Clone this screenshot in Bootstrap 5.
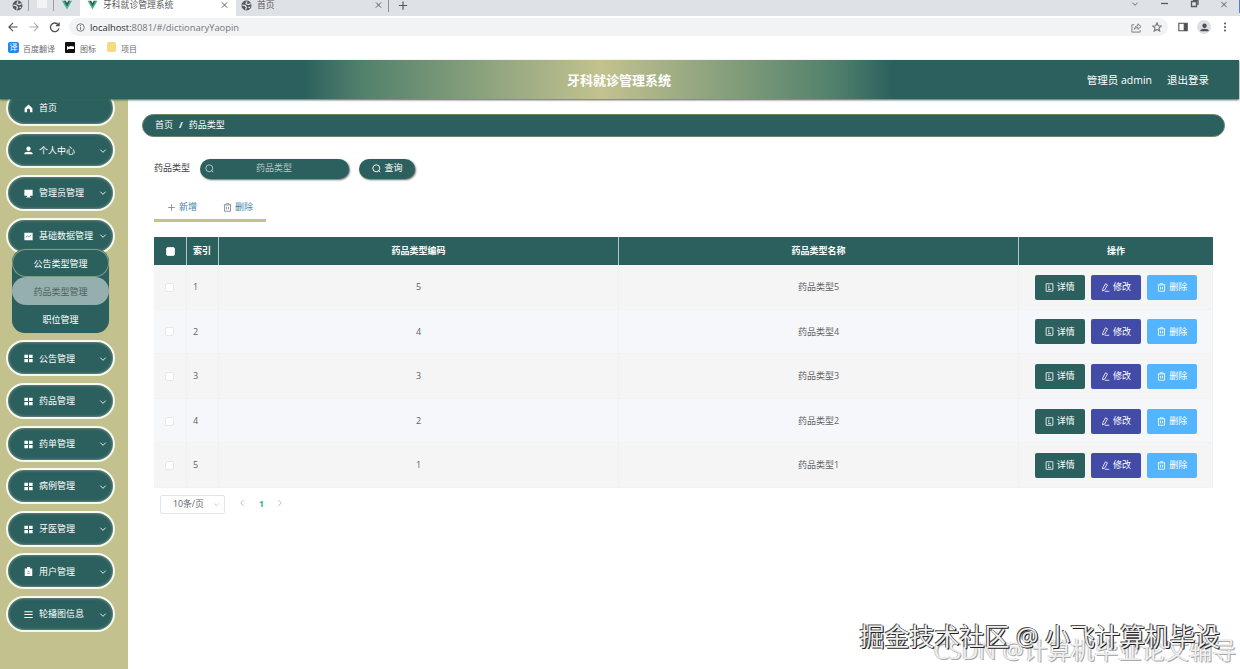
<!DOCTYPE html>
<html lang="zh-CN">
<head>
<meta charset="utf-8">
<title>牙科就诊管理系统</title>
<link href="https://cdn.jsdelivr.net/npm/bootstrap@5.3.0/dist/css/bootstrap.min.css" rel="stylesheet">
<style>
:root{--teal:#2c605e;--khaki:#c3c28f}
body{font:9px/1.4 "Open Sans","Noto Sans CJK SC",sans-serif;color:#606266;background:#fff;height:669px;overflow:hidden}
svg{display:block;flex:none;fill:none;stroke:currentColor;stroke-width:1.3}
svg.fill{fill:currentColor;stroke:none}
.tabstrip{height:16px;background:#dee1e6;color:#55585b;overflow:hidden;font-size:8.8px}
.tabstrip .pinned{width:25px;height:11px;border-right:1px solid #9a9da1}
.tab-on{width:156px;background:#fff;height:16px}
.tab-off{width:153px;height:12px;border-right:1px solid #8d9094}
.tools{height:22px;color:#4c4f53}
.omni{height:18px;border-radius:9px;background:#f1f3f4;font-size:9.35px;color:#74777b}
.omni b{font-weight:400;color:#2c2f33}
.favs{height:22px;color:#6a6d70;font-size:8px;line-height:12px;padding:4px 0 0 8px}
.sq{width:11px;height:11px;border-radius:2px}
.topbar{height:39px;background:linear-gradient(90deg,var(--teal) 24.5%,#50806b 29%,var(--khaki) 48.5%,#50806b 67.5%,var(--teal) 72%);box-shadow:0 1px 2px #555;color:#fff;width:1239px;z-index:2}
.topbar h1{font-size:13px;font-weight:700;margin:0;line-height:41px;padding-right:1px}
.userbox{font-size:10.5px;right:30px;top:0;line-height:40px}
.shell{height:570px}
.side{width:128px;background:var(--khaki);overflow:hidden;padding-left:6px}
.menu{margin-top:-9.3px}
.mi{width:109px;height:36px;margin-bottom:6.62px;border:2px solid #f7f8ee;border-radius:18px;background:var(--teal);box-shadow:inset 0 0 3px #9aa99a;color:#fff;padding:1px 6px 0 16px}
.mi .lbl{margin-left:6px}
.sub{width:97px;margin:-11px 0 7px 6px;border-radius:13px;background:var(--teal);color:#fff;position:relative;overflow:hidden;box-shadow:0 0 1px #8ca292}
.sub div{height:28.1px;line-height:29px;text-align:center;border-radius:14px}
.sub div:first-child{box-shadow:inset 0 0 0 1px #809d83}
.sub .cur{background:#95afae;color:#4c6261}
.main{padding:15px 27px 0 26px}
.crumb{height:23px;margin:0 -11px 0 -12px;width:1083px;border-radius:12px;background:var(--teal);border:1px solid #6c8467;color:#fff;padding-left:12px}
.search{margin-top:21px;height:21px;color:#404246}
.pill{height:20px;border-radius:10px;background:var(--teal);color:#fff;box-shadow:1px 1px 2px #666}
.inp{width:149px;margin-left:10px;color:#b6c6c4;padding-left:5px}
.inp span{margin-left:42px}
.go{width:56px;margin-left:10px}
.ops{width:112px;height:31px;margin-top:12px;border-bottom:3px solid var(--khaki);color:#3f83a8;padding:5px 0 0 13px}
.ops svg{color:#8a979d}
.grid{width:1059px;margin:15px 0 0;table-layout:fixed;border-collapse:separate;border-spacing:0;text-align:center}
.grid th{background:var(--teal);color:#fff;height:28px;padding:1px 0 0;border-right:1px solid #b4c6c2;font-weight:700}
.grid th:last-child{border-right:0}
.grid td{height:44.6px;padding:1px 0 0;border-right:1px solid #f0f1f3;border-bottom:1px solid #f1f2f4}
.grid td:last-child{padding-left:1px}
.grid td:nth-child(2),.grid th:nth-child(2){text-align:left;padding-left:6px}
.grid tr:nth-child(odd) td{background:#f5f5f5}
.grid tr:nth-child(even) td{background:#f5f7fb}
.ck{width:9px;height:9px;border-radius:2px;background:#fff;margin:auto;border:1px solid #e7e8eb;position:relative;left:-1px}
.act{width:50px;height:25px;border-radius:2px;color:#fff}
.act svg{opacity:.85}
.pager{margin:7px 0 0 6px}
.sel{width:65px;height:19px;border:1px solid #e2e4e8;border-radius:2px;padding:0 4px 0 12px;font-size:8.8px}
.pg{height:17px;margin-left:14px;color:#a5a8ad}
.pg b{margin:0 12px 0 13px;color:#27b38d;font-size:8.5px}
.wm1{right:20px;top:619px;font-size:25px;line-height:34px;color:#eee;text-shadow:1px 1px 0 #222,-1px -1px 0 #555,1px 0 0 #666;white-space:nowrap;z-index:4}
.wm2{right:4px;top:633px;font-size:23.6px;line-height:34px;color:#ffffffc0;text-shadow:1px 1px 0 #aaa,-1px 0 0 #ccc;white-space:nowrap;z-index:3}
</style>
</head>
<body class="position-relative">
<svg width="0" height="0" class="position-absolute"><defs>
<symbol id="globe" viewBox="0 0 12 12"><circle cx="6" cy="6" r="4.8" fill="#54585c"/><path d="M1.5 5.500l3 .5 1.500 2-1 2.500M6.500 1.500L5.500 4l2.500 1 2.500-1M8 8h2" stroke="#dee1e6" stroke-width="1.400"/></symbol>
<symbol id="vue" viewBox="0 0 12 12"><path d="M0 1h3l3 5 3-5h3L6 11.500z" fill="#41b883" stroke="none"/><path d="M2.500 1h2L6 3.800 7.500 1h2L6 7.500z" fill="#35495e" stroke="none"/></symbol>
<symbol id="x" viewBox="0 0 12 12"><path d="M2.500 2.500l7 7M9.500 2.500l-7 7"/></symbol>
<symbol id="plus" viewBox="0 0 12 12"><path d="M6 1.500v9M1.500 6h9"/></symbol>
<symbol id="down" viewBox="0 0 12 12"><path d="M2 4l4 4 4-4"/></symbol>
<symbol id="lens" viewBox="0 0 12 12"><circle cx="5.700" cy="5.700" r="4.600"/><path d="M9 9l2 2"/></symbol>
<symbol id="trash" viewBox="0 0 12 12"><path d="M1 2.500h10M4 2.500V1h4v1.500M2 2.500V11h8V2.500M4.700 5v3.500M7.300 5v3.500"/></symbol>
<symbol id="doc" viewBox="0 0 12 12"><path d="M1.500 1h9v10h-9zM4 4h2M4 6.200h2M4 8.500h4"/></symbol>
<symbol id="pen" viewBox="0 0 12 12"><path d="M2.500 7.500L6 1l2.700 1.500L5 9.300 2 10.500zM5 11h6"/></symbol>
<symbol id="home" viewBox="0 0 12 12"><path d="M6 .8L.8 5.500V11H4V8q0-2 2-2t2 2v3h3.200V5.500z"/></symbol>
<symbol id="user" viewBox="0 0 12 12"><circle cx="6" cy="3.700" r="2.900"/><path d="M.7 11V9.500Q1 7.500 6 7.500t5.300 2V11z"/></symbol>
<symbol id="screen" viewBox="0 0 12 12"><path d="M.5 1h11v8H8v1.500h1.500v.8h-7v-.8H4V9H.5z"/></symbol>
<symbol id="chart" viewBox="0 0 12 12"><path d="M.5 1h11v10H.5z"/><path d="M2.500 7l2.500-2 1.500 1.500L9.500 4" fill="none" stroke="#2c605e" stroke-width=".9"/></symbol>
<symbol id="four" viewBox="0 0 12 12"><path d="M.5 1H5.300V5.300H.5zM6.700 1h4.800v4.300H6.700zM.5 6.700h4.800V11H.5zM6.700 6.700h4.800V11H6.700z"/></symbol>
<symbol id="clip" viewBox="0 0 12 12"><path d="M1 2h3V0h4v2h3v10H1z"/><path d="M4.500 5L6 6.500 7.500 5M4.500 8.500h3" fill="none" stroke="#2c605e" stroke-width=".8"/></symbol>
<symbol id="bars" viewBox="0 0 12 12"><path d="M.5 1.500h11V3H.5zM.5 5.300h11v1.500H.5zM.5 9.200h11v1.500H.5z"/></symbol>
</defs></svg>

<div class="tabstrip d-flex position-relative">
  <div class="d-flex" style="width:80px;padding-left:4px">
    <div class="pinned d-flex"><svg class="ms-2" width="11" height="11"><use href="#globe"/></svg></div>
    <div class="pinned d-flex"><span class="ms-2" style="width:10px;height:8px;background:#f2f4f3"></span></div>
    <svg class="ms-2" width="10" height="10"><use href="#vue"/></svg>
  </div>
  <div class="tab-on d-flex"><svg style="margin-left:7px" width="11" height="10"><use href="#vue"/></svg><span style="margin:-1px auto 0 5px">牙科就诊管理系统</span><svg style="margin-right:7px" width="9" height="10"><use href="#x"/></svg></div>
  <div class="tab-off d-flex"><svg style="margin-left:5px" width="11" height="11"><use href="#globe"/></svg><span style="margin:-1px auto 0 5px">首页</span><svg style="margin-right:5px" width="9" height="10"><use href="#x"/></svg></div>
  <svg style="margin-left:8px" width="12" height="11"><use href="#plus"/></svg>
  <div class="ms-auto d-flex" style="gap:20px;padding-right:11px"><svg width="10" height="8"><use href="#down"/></svg><svg width="9" height="8"><path d="M1 3.500h7"/></svg><svg width="10" height="8"><path d="M2.500 1.500h5v5h-5zM4 0h5v5"/></svg><svg width="10" height="9"><use href="#x"/></svg></div>
  <span class="position-absolute end-0 top-0" style="width:1px;height:13px;background:#5878e0"></span>
</div>
<div class="tools d-flex align-items-center">
  <svg style="margin-left:8px" width="10" height="10" viewBox="0 0 12 12"><path d="M11.500 6H1.500M6 1L1 6l5 5"/></svg>
  <svg style="margin-left:11px;color:#acafb2" width="10" height="10" viewBox="0 0 12 12"><path d="M.5 6h10M6 1l5 5-5 5"/></svg>
  <svg style="margin-left:10px" width="11" height="11" viewBox="0 0 12 12"><path d="M10 3A4.700 4.700 0 1 0 10.800 7M11 .5V4H7.500" stroke-width="1.500"/></svg>
  <div class="omni d-flex align-items-center flex-grow-1" style="margin-left:9px;margin-right:10px;padding:0 6px 0 7px">
    <svg width="9" height="9" viewBox="0 0 12 12"><circle cx="6" cy="6" r="5"/><path d="M6 5v4M6 2.700v1.300"/></svg>
    <span style="margin-left:5px;padding-top:1px" class="me-auto"><b>localhost:</b>8081/#/dictionaryYaopin</span>
    <svg width="11" height="11" viewBox="0 0 12 12"><path d="M3.500 3H1v8h9V9M3.500 8q.5-4 4-4V2l3.500 3-3.500 3V6q-2.500 0-4 2z" stroke-width="1"/></svg>
    <svg style="margin-left:10px" width="10" height="10" viewBox="0 0 12 12"><path d="M6 1l1.500 3.400 3.700.3-2.800 2.500.9 3.700L6 9l-3.300 1.900.9-3.700L.8 4.700l3.700-.3z"/></svg>
  </div>
  <svg width="10" height="10" viewBox="0 0 12 12"><path d="M1 1.500h10v9H1z"/><path d="M7.500 2h3v8h-3z" fill="currentColor"/></svg>
  <span class="rounded-circle d-flex align-items-center justify-content-center" style="width:14px;height:14px;background:#dcdfe4;margin-left:9px"><svg class="fill" width="9" height="9"><use href="#user"/></svg></span>
  <svg class="fill" style="margin:0 12px 0 11px" width="6" height="10"><circle cx="3" cy="1.500" r="1"/><circle cx="3" cy="5" r="1"/><circle cx="3" cy="8.500" r="1"/></svg>
</div>
<div class="favs d-flex">
  <span class="sq text-white text-center" style="background:#2686ee;line-height:10px">译</span><span style="margin-left:4px;width:42px;padding-top:1px">百度翻译</span>
  <svg width="10" height="11"><rect width="10" height="11" rx="1" fill="#111" stroke="none"/><path d="M2 8V4l2 1 1-1 4 .5v2.500H3.500z" fill="#fff" stroke="none"/></svg><span style="margin-left:5px;width:27px;padding-top:1px">图标</span>
  <span class="sq" style="background:#f7d97e;width:9px;height:10px"></span><span style="margin-left:5px;padding-top:1px">项目</span>
</div>

<header class="topbar position-relative text-center">
  <h1>牙科就诊管理系统</h1>
  <div class="userbox position-absolute d-flex"><span>管理员 admin</span><span style="margin-left:15px">退出登录</span></div>
</header>
<div class="shell d-flex">
  <nav class="side flex-shrink-0"><div class="menu" id="menu"></div></nav>
  <main class="main flex-grow-1">
    <div class="crumb d-flex align-items-center"><span>首页</span><b style="margin:0 6px">/</b><span>药品类型</span></div>
    <div class="search d-flex align-items-center"><span>药品类型</span>
      <div class="pill inp d-flex align-items-center"><svg width="9" height="9"><use href="#lens"/></svg><span>药品类型</span></div>
      <div class="pill go d-flex align-items-center justify-content-center"><svg width="9" height="9"><use href="#lens"/></svg><span style="margin-left:4px">查询</span></div></div>
    <div class="ops d-flex align-items-center"><svg width="9" height="9"><use href="#plus"/></svg><span style="margin-left:3px">新增</span><svg style="margin-left:26px" width="9" height="9"><use href="#trash"/></svg><span style="margin-left:3px">删除</span></div>
    <table class="grid"><colgroup><col style="width:33px"><col style="width:32px"><col style="width:400px"><col style="width:400px"><col style="width:194px"></colgroup>
      <thead><tr><th><div class="ck" style="left:0"></div></th><th>索引</th><th>药品类型编码</th><th>药品类型名称</th><th>操作</th></tr></thead><tbody id="rows"></tbody></table>
    <div class="pager d-flex"><div class="sel d-flex align-items-center justify-content-between"><span>10条/页</span><svg width="7" height="7" style="color:#b9bcc2"><use href="#down"/></svg></div>
      <div class="pg d-flex align-items-center"><svg width="7" height="8" viewBox="0 0 12 12"><path d="M8 1L3 6l5 5"/></svg><b>1</b><svg width="7" height="8" viewBox="0 0 12 12"><path d="M4 1l5 5-5 5"/></svg></div></div>
  </main>
</div>
<div class="wm2 position-absolute">CSDN @计算机毕业论文辅导</div>
<div class="wm1 position-absolute">掘金技术社区 @ 小飞计算机毕设</div>
<script>
const icon=(n,s,c='')=>`<svg class="${c}" width="${s}" height="${s}"><use href="#${n}"/></svg>`;
const items=[['home','首页'],['user','个人中心'],['screen','管理员管理'],['chart','基础数据管理'],['four','公告管理'],['four','药品管理'],['four','药单管理'],['four','病例管理'],['four','牙医管理'],['clip','用户管理'],['bars','轮播图信息']];
document.getElementById('menu').innerHTML=items.map(([i,t],k)=>`<div class="mi d-flex align-items-center">${icon(i,9,'fill')}<span class="lbl me-auto">${t}</span>${k?icon('down',8):''}</div>`+(k==3?'<div class="sub"><div>公告类型管理</div><div class="cur">药品类型管理</div><div>职位管理</div></div>':'')).join('');
const acts=[['doc','详情','#2c605e'],['pen','修改','#424ba6'],['trash','删除','#53b5ff']];
document.getElementById('rows').innerHTML=[5,4,3,2,1].map((n,k)=>`<tr><td><div class="ck"></div></td><td>${k+1}</td><td>${n}</td><td>药品类型${n}</td><td><div class="d-flex justify-content-center" style="gap:6.2px">${acts.map(([i,t,c])=>`<div class="act d-flex align-items-center justify-content-center" style="background:${c};gap:3px">${icon(i,9)}<span>${t}</span></div>`).join('')}</div></td></tr>`).join('');
</script>
<script src="https://cdn.jsdelivr.net/npm/bootstrap@5.3.0/dist/js/bootstrap.bundle.min.js"></script>
</body>
</html>
